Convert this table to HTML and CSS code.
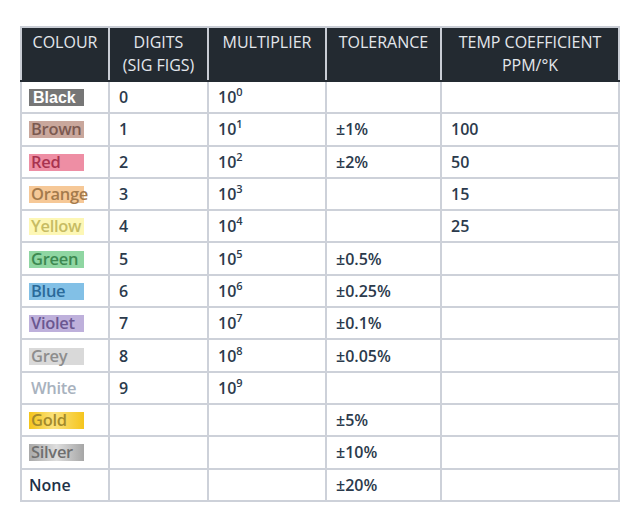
FILE: index.html
```html
<!DOCTYPE html>
<html>
<head>
<meta charset="utf-8">
<link rel="stylesheet" href="styles.css">
</head>
<body>
<div class="wrap">
<table class="codes">
<colgroup>
<col class="c1"><col class="c2"><col class="c3"><col class="c4"><col class="c5">
</colgroup>
<thead>
<tr>
<th>COLOUR</th>
<th>DIGITS<br>(SIG FIGS)</th>
<th>MULTIPLIER</th>
<th>TOLERANCE</th>
<th>TEMP COEFFICIENT<br>PPM/°K</th>
</tr>
</thead>
<tbody>
<tr><td class="col"><span class="sw black">Black</span></td><td>0</td><td>10<sup>0</sup></td><td></td><td></td></tr>
<tr><td class="col"><span class="sw brown">Brown</span></td><td>1</td><td>10<sup>1</sup></td><td>±1%</td><td>100</td></tr>
<tr><td class="col"><span class="sw red">Red</span></td><td>2</td><td>10<sup>2</sup></td><td>±2%</td><td>50</td></tr>
<tr><td class="col"><span class="sw orange">Orange</span></td><td>3</td><td>10<sup>3</sup></td><td></td><td>15</td></tr>
<tr><td class="col"><span class="sw yellow">Yellow</span></td><td>4</td><td>10<sup>4</sup></td><td></td><td>25</td></tr>
<tr><td class="col"><span class="sw green">Green</span></td><td>5</td><td>10<sup>5</sup></td><td>±0.5%</td><td></td></tr>
<tr><td class="col"><span class="sw blue">Blue</span></td><td>6</td><td>10<sup>6</sup></td><td>±0.25%</td><td></td></tr>
<tr><td class="col"><span class="sw violet">Violet</span></td><td>7</td><td>10<sup>7</sup></td><td>±0.1%</td><td></td></tr>
<tr><td class="col"><span class="sw grey">Grey</span></td><td>8</td><td>10<sup>8</sup></td><td>±0.05%</td><td></td></tr>
<tr><td class="col"><span class="sw white">White</span></td><td>9</td><td>10<sup>9</sup></td><td></td><td></td></tr>
<tr><td class="col"><span class="sw gold">Gold</span></td><td></td><td></td><td>±5%</td><td></td></tr>
<tr><td class="col"><span class="sw silver">Silver</span></td><td></td><td></td><td>±10%</td><td></td></tr>
<tr><td class="col"><span class="none">None</span></td><td></td><td></td><td>±20%</td><td></td></tr>
</tbody>
</table>
</div>
</body>
</html>
```
FILE: styles.css
```css
html, body {
  margin: 0;
  padding: 0;
  background: #ffffff;
}
.wrap {
  padding: 26px 0 0 20px;
}
.codes {
  border-collapse: collapse;
  table-layout: fixed;
  width: 598px;
  font-family: "Open Sans", "DejaVu Sans", sans-serif;
  font-size: 16px;
  color: #2b3a4c;
}
.c1 { width: 88px; }
.c2 { width: 99px; }
.c3 { width: 118px; }
.c4 { width: 115px; }
.c5 { width: 178px; }
.codes th {
  background: #232a31;
  color: #e3e7ec;
  font-weight: 400;
  font-size: 16px;
  line-height: 23px;
  text-align: center;
  vertical-align: top;
  padding: 3px 3px 0;
  height: 49px;
  border: 2px solid #c9cdd5;
  border-bottom-color: #232a31;
  white-space: nowrap;
}
.codes td {
  height: 32.3px;
  padding: 0 8px 0 9px;
  border: 2px solid #cdd1d9;
  font-weight: 600;
  line-height: 20px;
  vertical-align: middle;
  box-sizing: border-box;
}
.codes td.col {
  padding-left: 7px;
}
.codes sup {
  font-size: 11px;
  line-height: 0;
  vertical-align: 7px;
}
.sw {
  display: inline-block;
  width: 55px;
  height: 17px;
  line-height: 16px;
  padding-left: 2px;
  box-sizing: border-box;
  white-space: nowrap;
  overflow: visible;
  font-weight: 600;
  font-size: 16.5px;
  letter-spacing: -0.3px;
}
.black {
  background: #767676;
  color: #ffffff;
  font-family: "Liberation Sans", Arial, sans-serif;
  font-weight: 700;
  font-size: 16px;
  padding-left: 4px;
  line-height: 17px;
  letter-spacing: 0;
}
.brown { background: #c9a79c; color: #7b5950; }
.red { background: #ee8ea4; color: #a8334f; }
.orange { background: #f6c897; color: #a47a4c; }
.yellow { background: #fdf7b5; color: #c7bc63; }
.green { background: #8fd6a2; color: #3d8951; }
.blue { background: #82c0e6; color: #2a6a99; }
.violet { background: #beb0db; color: #6a5790; }
.grey { background: #d9d9d9; color: #8d8d8d; }
.white { background: transparent; color: #a8b2be; }
.gold {
  background: linear-gradient(90deg, #f4c41a 0%, #fbe27c 45%, #f5c51d 100%);
  color: #a38a2c;
}
.silver {
  background: linear-gradient(90deg, #a9a9a9 0%, #dedede 50%, #a6a6a6 100%);
  color: #6f6f6f;
}
.none {
  color: #1e3147;
}
```
